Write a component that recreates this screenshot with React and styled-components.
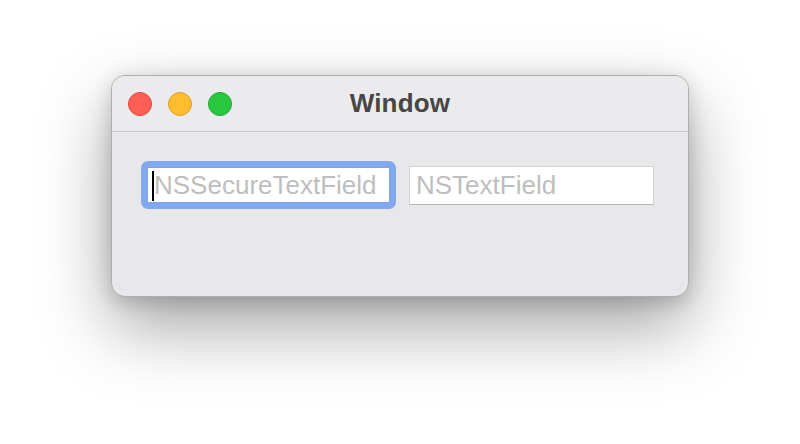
import React from "react";
import styled, { createGlobalStyle } from "styled-components";

const GlobalStyle = createGlobalStyle`
  body {
    margin: 0;
    background: #ffffff;
    font-family: "Liberation Sans", Arial, sans-serif;
  }
`;

const Page = styled.div`
  width: 800px;
  height: 444px;
  display: flex;
  align-items: flex-start;
  padding: 75px 0 0 111px;
  box-sizing: border-box;
  overflow: hidden;
`;

const Window = styled.div`
  width: 578px;
  height: 222px;
  box-sizing: border-box;
  border: 1px solid #aeaeb0;
  border-radius: 14px;
  background: #e8e8ea;
  overflow: hidden;
  display: flex;
  flex-direction: column;
  box-shadow: 0 30px 70px rgba(0, 0, 0, 0.36), 0 6px 18px rgba(0, 0, 0, 0.12),
    0 0 24px rgba(0, 0, 0, 0.06);
`;

const TitleBar = styled.div`
  height: 55px;
  flex-shrink: 0;
  background: #ebebed;
  border-bottom: 1px solid #cbcbcd;
  display: grid;
  grid-template-columns: 1fr auto 1fr;
  align-items: center;
  padding: 0 16px;
`;

const Lights = styled.div`
  display: flex;
  gap: 16px;
`;

const Light = styled.span`
  width: 24px;
  height: 24px;
  border-radius: 50%;
  box-sizing: border-box;
  background: ${(p) => p.$fill};
  border: 1px solid ${(p) => p.$edge};
`;

const Title = styled.div`
  font-size: 26px;
  font-weight: bold;
  color: #464646;
  letter-spacing: 0.2px;
`;

const Content = styled.div`
  display: flex;
  align-items: center;
  gap: 13px;
  padding: 29px 0 0 29px;
`;

const FocusRing = styled.div`
  border: 6px solid #82a9ef;
  border-radius: 7px;
  display: flex;
`;

const Field = styled.div`
  position: relative;
  width: ${(p) => p.$w}px;
  height: ${(p) => p.$h}px;
  box-sizing: border-box;
  background: #ffffff;
  border: 1px solid ${(p) => (p.$focused ? "#7fa3e6" : "#d3d3d5")};
  border-bottom-color: ${(p) => (p.$focused ? "#7fa3e6" : "#b4b4b6")};
  display: flex;
  align-items: center;
  padding-left: 6px;
  font-size: 26px;
  color: #bebebe;
  white-space: nowrap;
  overflow: hidden;
`;

const Caret = styled.span`
  position: absolute;
  left: 4px;
  top: 3px;
  width: 2px;
  height: 30px;
  background: #000;
`;

export default function App() {
  return (
    <>
      <GlobalStyle />
      <Page>
        <Window>
          <TitleBar>
            <Lights>
              <Light $fill="#fe5f57" $edge="#e0443e" />
              <Light $fill="#febc2e" $edge="#dea123" />
              <Light $fill="#28c840" $edge="#1aab29" />
            </Lights>
            <Title>Window</Title>
            <div />
          </TitleBar>
          <Content>
            <FocusRing>
              <Field $w={243} $h={36} $focused>
                <Caret />
                NSSecureTextField
              </Field>
            </FocusRing>
            <Field $w={245} $h={39}>
              NSTextField
            </Field>
          </Content>
        </Window>
      </Page>
    </>
  );
}
